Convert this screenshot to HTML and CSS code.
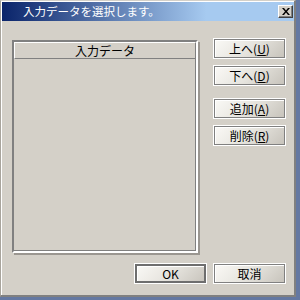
FILE: index.html
```html
<!DOCTYPE html>
<html>
<head>
<meta charset="UTF-8">
<title>入力データを選択します。</title>
<link rel="stylesheet" href="styles.css">
</head>
<body>

	<div class="window">
		<div class="titlebar">
			<span class="title">入力データを選択します。</span>
			<button type="button" class="closebtn">
				<svg width="8" height="7" viewBox="0 0 8 7">
					<path d="M0 0h2l2 2.5 2-2.5h2l-3 3.5 3 3.5h-2l-2-2.5-2 2.5h-2l3-3.5z" fill="#000"/>
				</svg>
			</button>
		</div>

		<div class="content">
			<div class="main">
				<div class="listbox">
					<div class="listhead">入力データ</div>
					<div class="listbody"></div>
				</div>
				<div class="sidebtns">
					<button type="button" class="btn">上へ(<u>U</u>)</button>
					<button type="button" class="btn">下へ(<u>D</u>)</button>
					<button type="button" class="btn gap">追加(<u>A</u>)</button>
					<button type="button" class="btn">削除(<u>R</u>)</button>
				</div>
			</div>
			<div class="footer">
				<button type="button" class="btn default">OK</button>
				<button type="button" class="btn">取消</button>
			</div>
		</div>
	</div>

</body>
</html>
```

FILE: styles.css
```css
body {
	margin: 0;
	background-color: #6478a2;
	font-family: "Noto Sans CJK JP", "Liberation Sans", sans-serif;
	font-size: 12px;
}

.window {
	width: 296px;
	height: 297px;
	box-sizing: border-box;
	background-color: #d4d0c8;
	border-top: 1px solid #d4d0c8;
	border-left: 1px solid #a8a49c;
	border-right: 2px solid #808080;
	border-bottom: 2px solid #808080;
	padding: 1px 0 0 1px;
	box-shadow: inset 1px 1px #fff;
	display: flex;
	flex-direction: column;
}

.titlebar {
	height: 19px;
	background: linear-gradient(to right, #0a246a, #a6caf0 70%, #a6caf0);
	display: flex;
	align-items: center;
	padding: 0 1px 0 21px;
}

.title {
	color: #fff;
	font-size: 11.5px;
	line-height: 19px;
	flex: 1;
}

.closebtn {
	width: 15px;
	height: 13px;
	padding: 0;
	margin: 0;
	background-color: #d4d0c8;
	border: 1px solid;
	border-color: #fff #404040 #404040 #fff;
	box-shadow: inset -1px -1px #808080;
	display: flex;
	align-items: center;
	justify-content: center;
}

.content {
	flex: 1;
	padding: 19px 8px 0 10px;
	display: flex;
	flex-direction: column;
}

.main {
	display: flex;
	justify-content: space-between;
}

.listbox {
	width: 182px;
	height: 209px;
	border: 2px solid #808080;
	border-right-color: #fff;
	border-bottom-color: #fff;
	box-shadow: 2px 2px 0 #9a9690;
	display: flex;
	flex-direction: column;
}

.listhead {
	height: 15px;
	line-height: 15px;
	text-align: center;
	border-top: 1px solid #fff;
	border-left: 1px solid #fff;
	border-bottom: 1px solid #808080;
	border-right: 1px solid #808080;
}

.listbody {
	flex: 1;
	border-right: 1px solid #808080;
	border-bottom: 1px solid #808080;
}

.sidebtns {
	display: flex;
	flex-direction: column;
	gap: 6px;
	margin-top: -2px;
}

.btn {
	width: 73px;
	height: 21px;
	padding: 0;
	margin: 0;
	font-family: "Noto Sans CJK JP", "Liberation Sans", sans-serif;
	font-size: 12px;
	line-height: 17px;
	color: #000;
	border: 1px solid #fff;
	box-shadow: inset 0 0 0 1px #808080, inset 2px 2px 0 #fff;
	background: linear-gradient(135deg, #fbfaf7, #e6e4de 50%, #c6c2ba);
}

.btn.gap {
	margin-top: 6px;
}

.btn.default {
	box-shadow: inset 0 0 0 2px #6e6e6e, inset 3px 3px 0 #fff;
}

.footer {
	display: flex;
	justify-content: flex-end;
	gap: 6px;
	margin-top: 10px;
}
```
